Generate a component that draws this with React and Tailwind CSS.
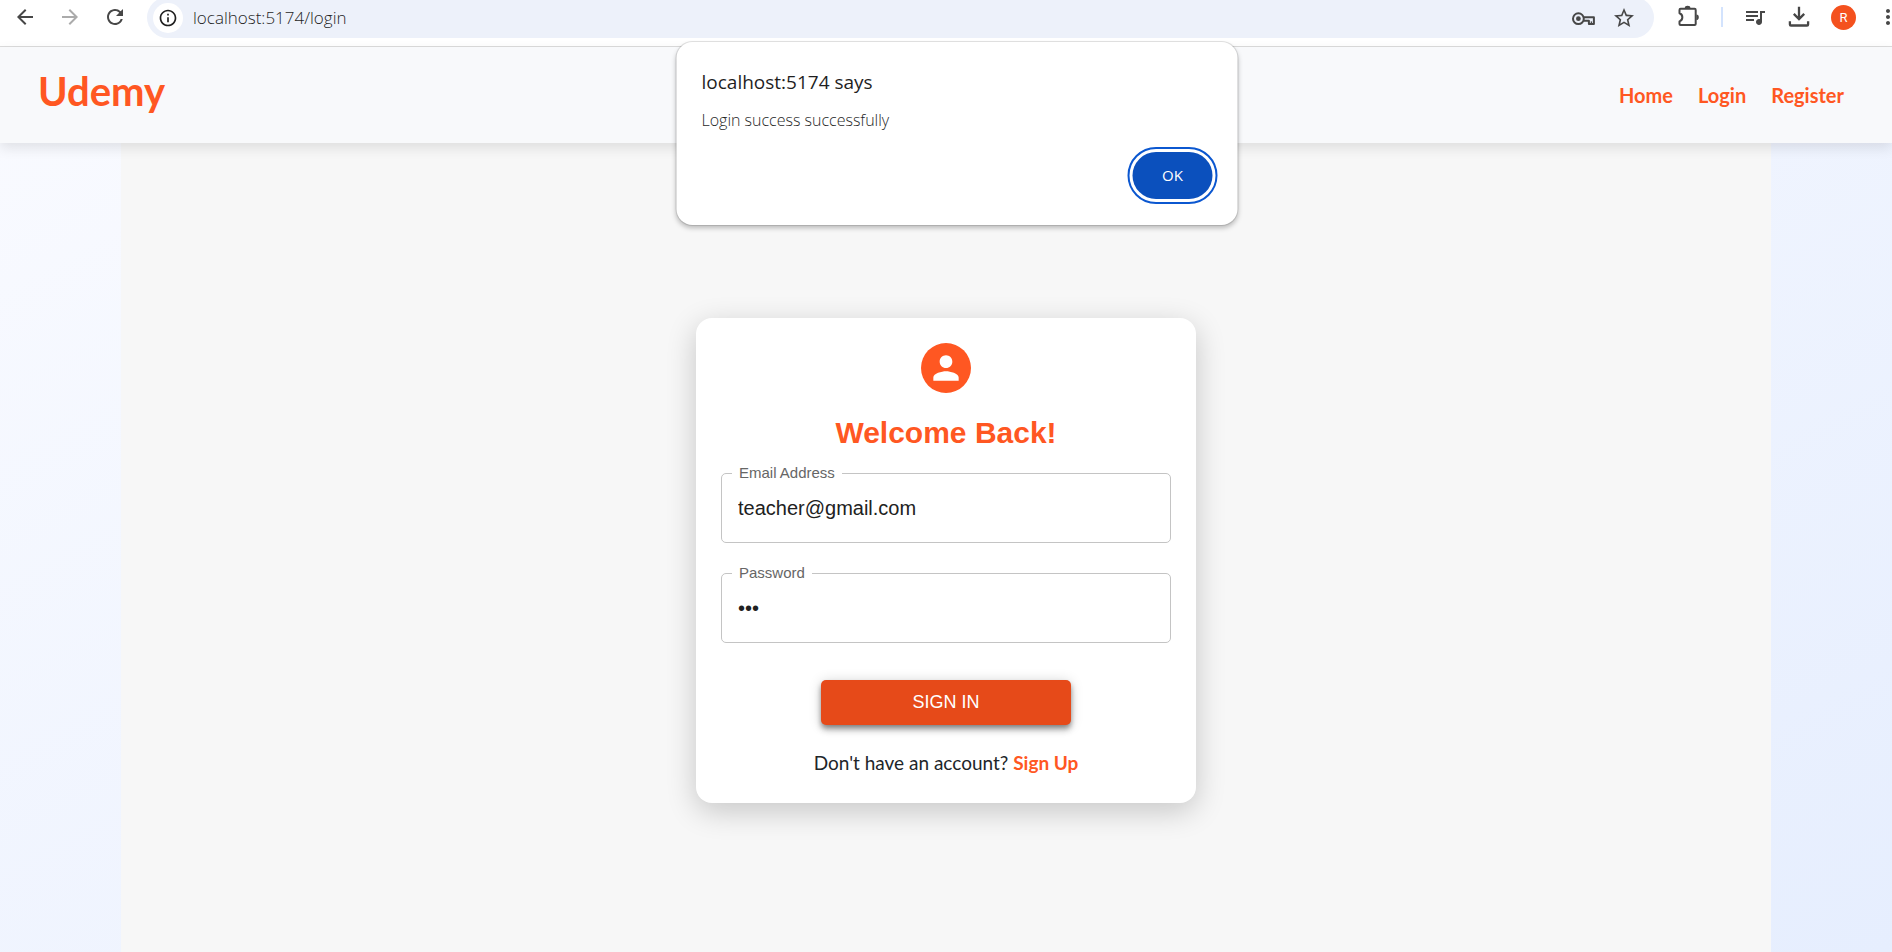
import {
  MdArrowBack,
  MdArrowForward,
  MdRefresh,
  MdInfoOutline,
  MdStarBorder,
  MdPerson,
  MdQueueMusic,
  MdMoreVert,
} from "react-icons/md";

const navLinks = ["Home", "Login", "Register"];

function KeyIcon() {
  return (
    <svg viewBox="0 0 24 24" className="size-6" fill="none" stroke="currentColor" strokeWidth="2">
      <circle cx="6.4" cy="12.7" r="5.4" />
      <circle cx="6.4" cy="12.7" r="2.4" fill="currentColor" stroke="none" />
      <path d="M11.6 11.2H21.9V18H16.9V14.7H11.6" strokeLinejoin="round" />
      <path d="M19.4 18V15.4" strokeWidth="1.4" />
    </svg>
  );
}

function ExtensionsIcon() {
  return (
    <svg viewBox="0 0 24 24" className="size-6" fill="none" stroke="currentColor" strokeWidth="2">
      <path
        d="M3.6 3.8H17.6Q18.7 3.8 18.7 4.9V19Q18.7 20.1 17.6 20.1H3.6Q2.5 20.1 2.5 19V16.4C6.3 15.2 6.3 9.4 2.5 8.2V4.9Q2.5 3.8 3.6 3.8Z"
        strokeLinejoin="round"
      />
      <path d="M7.8 3.2a2.8 2.4 0 0 1 5.6 0zM19.4 9.4a2.4 2.8 0 0 1 0 5.6z" fill="currentColor" stroke="none" />
    </svg>
  );
}

function DownloadIcon() {
  return (
    <svg viewBox="0 0 24 24" className="size-6" fill="none" stroke="currentColor" strokeWidth="2.3">
      <path d="M12 1.8V14M6.8 8.9L12 14.1L17.2 8.9" />
      <path d="M2.9 16.2V19.4Q2.9 20.5 4 20.5H20Q21.1 20.5 21.1 19.4V16.2" />
    </svg>
  );
}

function BrowserBar() {
  return (
    <div className="flex h-[47px] items-start overflow-hidden border-b border-[#dcdcdc] bg-white text-[#474747]">
      <div className="flex h-[34px] items-center gap-[21px] pl-[13px]">
        <button aria-label="Back">
          <MdArrowBack className="size-6" />
        </button>
        <button aria-label="Forward" disabled className="text-[#ababab]">
          <MdArrowForward className="size-6" />
        </button>
        <button aria-label="Reload">
          <MdRefresh className="size-6" />
        </button>
      </div>
      <div className="-mt-[3px] ml-5 flex h-[41px] min-w-0 flex-1 items-center rounded-full bg-[#edf1fa] pr-[18px] pl-[6px]">
        <button
          aria-label="Site information"
          className="flex size-[30px] items-center justify-center rounded-full bg-white text-[#1f1f1f]"
        >
          <MdInfoOutline className="size-5" />
        </button>
        <input
          aria-label="Address"
          defaultValue="localhost:5174/login"
          className="ml-[10px] min-w-0 flex-1 bg-transparent font-['Open_Sans',sans-serif] text-[17px] font-light text-[#1f1f1f] outline-none"
        />
        <div className="flex items-center gap-4">
          <button aria-label="Passwords">
            <KeyIcon />
          </button>
          <button aria-label="Bookmark this page">
            <MdStarBorder className="size-6" />
          </button>
        </div>
      </div>
      <div className="-mr-2 flex h-[34px] items-center gap-5 pl-[23px]">
        <button aria-label="Extensions">
          <ExtensionsIcon />
        </button>
        <span className="h-5 w-[2px] bg-[#d3e3fd]" />
        <button aria-label="Media controls">
          <MdQueueMusic className="size-6" />
        </button>
        <button aria-label="Downloads">
          <DownloadIcon />
        </button>
        <button
          aria-label="Profile"
          className="flex size-[25px] items-center justify-center rounded-full bg-[#f4511e] font-[Roboto,sans-serif] text-[13px] leading-none text-white"
        >
          R
        </button>
        <button aria-label="Menu">
          <MdMoreVert className="size-6" />
        </button>
      </div>
    </div>
  );
}

function SiteHeader() {
  return (
    <header className="relative z-10 flex h-24 items-center justify-between bg-[#f8f9fb] pr-12 pl-[38px] text-[#ff5722] shadow-[0_5px_12px_rgba(0,0,0,0.1)]">
      <a href="#home" className="pb-2 text-[40px] leading-none font-bold">
        Udemy
      </a>
      <nav className="flex gap-[25px] text-[20px] font-bold">
        {navLinks.map((label) => (
          <a key={label} href="#">
            {label}
          </a>
        ))}
      </nav>
    </header>
  );
}

function AlertDialog() {
  return (
    <div
      role="alertdialog"
      aria-labelledby="alert-title"
      aria-describedby="alert-message"
      className="absolute top-[42px] left-1/2 z-20 ml-[11px] flex h-[183px] w-[561px] -translate-x-1/2 flex-col rounded-2xl bg-white px-[25px] pt-[26px] pb-[26px] font-['Open_Sans',sans-serif] text-[#1f1f1f] shadow-[0_0_0_1px_rgba(0,0,0,0.1),0_3px_5px_rgba(0,0,0,0.25)]"
    >
      <h2 id="alert-title" className="text-[19px] leading-7 font-medium">
        localhost:5174 says
      </h2>
      <p id="alert-message" className="mt-3 text-[16px] leading-6 font-light">
        Login success successfully
      </p>
      <button className="mt-auto h-[47px] w-20 self-end rounded-full bg-[#0b50bd] text-[15px] font-medium text-white outline-2 outline-offset-3 outline-[#0b57d0]">
        OK
      </button>
    </div>
  );
}

function Field({ id, label, type, value }) {
  return (
    <div className="relative">
      <input
        id={id}
        type={type}
        defaultValue={value}
        className="block h-[70px] w-full rounded-[5px] border border-[#c4c4c4] bg-white px-4 text-[20px] text-[#212121] outline-none"
      />
      <label
        htmlFor={id}
        className="absolute top-0 left-[11px] -translate-y-1/2 bg-white px-[7px] text-[15px] leading-5 text-[#666666]"
      >
        {label}
      </label>
    </div>
  );
}

function LoginCard() {
  return (
    <form
      onSubmit={(event) => event.preventDefault()}
      className="flex w-[500px] flex-col items-center rounded-2xl bg-white p-[25px] font-['Liberation_Sans',sans-serif] shadow-[0_8px_30px_rgba(0,0,0,0.2)]"
    >
      <div className="flex size-[50px] items-center justify-center rounded-full bg-[#ff5722] text-white">
        <MdPerson className="size-[38px]" />
      </div>
      <h1 className="mt-4 text-[30px] leading-[47px] font-bold text-[#ff5722]">Welcome Back!</h1>
      <div className="mt-[17px] flex w-full flex-col gap-[30px]">
        <Field id="email" label="Email Address" type="email" value="teacher@gmail.com" />
        <Field id="password" label="Password" type="password" value="123" />
      </div>
      <button
        type="submit"
        className="mt-[37px] h-[45px] w-[250px] rounded-[5px] bg-[#e64a19] text-[18px] text-white shadow-[0_3px_5px_-1px_rgba(0,0,0,0.3),0_5px_6px_rgba(0,0,0,0.24),0_1px_13px_rgba(0,0,0,0.16)]"
      >
        SIGN IN
      </button>
      <p className="mt-[23px] font-['Lato',sans-serif] text-[19px] leading-[30px] text-[#212529]">
        Don't have an account?{" "}
        <a href="#register" className="font-bold text-[#ff5722]">
          Sign Up
        </a>
      </p>
    </form>
  );
}

export default function App() {
  return (
    <div className="relative flex min-h-screen flex-col overflow-x-hidden bg-linear-to-br from-[#fafbff] to-[#e6eefe] font-['Lato',sans-serif]">
      <BrowserBar />
      <SiteHeader />
      <main className="mx-auto flex w-full max-w-[1650px] flex-1 flex-col items-center bg-[#f7f7f7] pt-[175px] pb-12">
        <LoginCard />
      </main>
      <AlertDialog />
    </div>
  );
}
